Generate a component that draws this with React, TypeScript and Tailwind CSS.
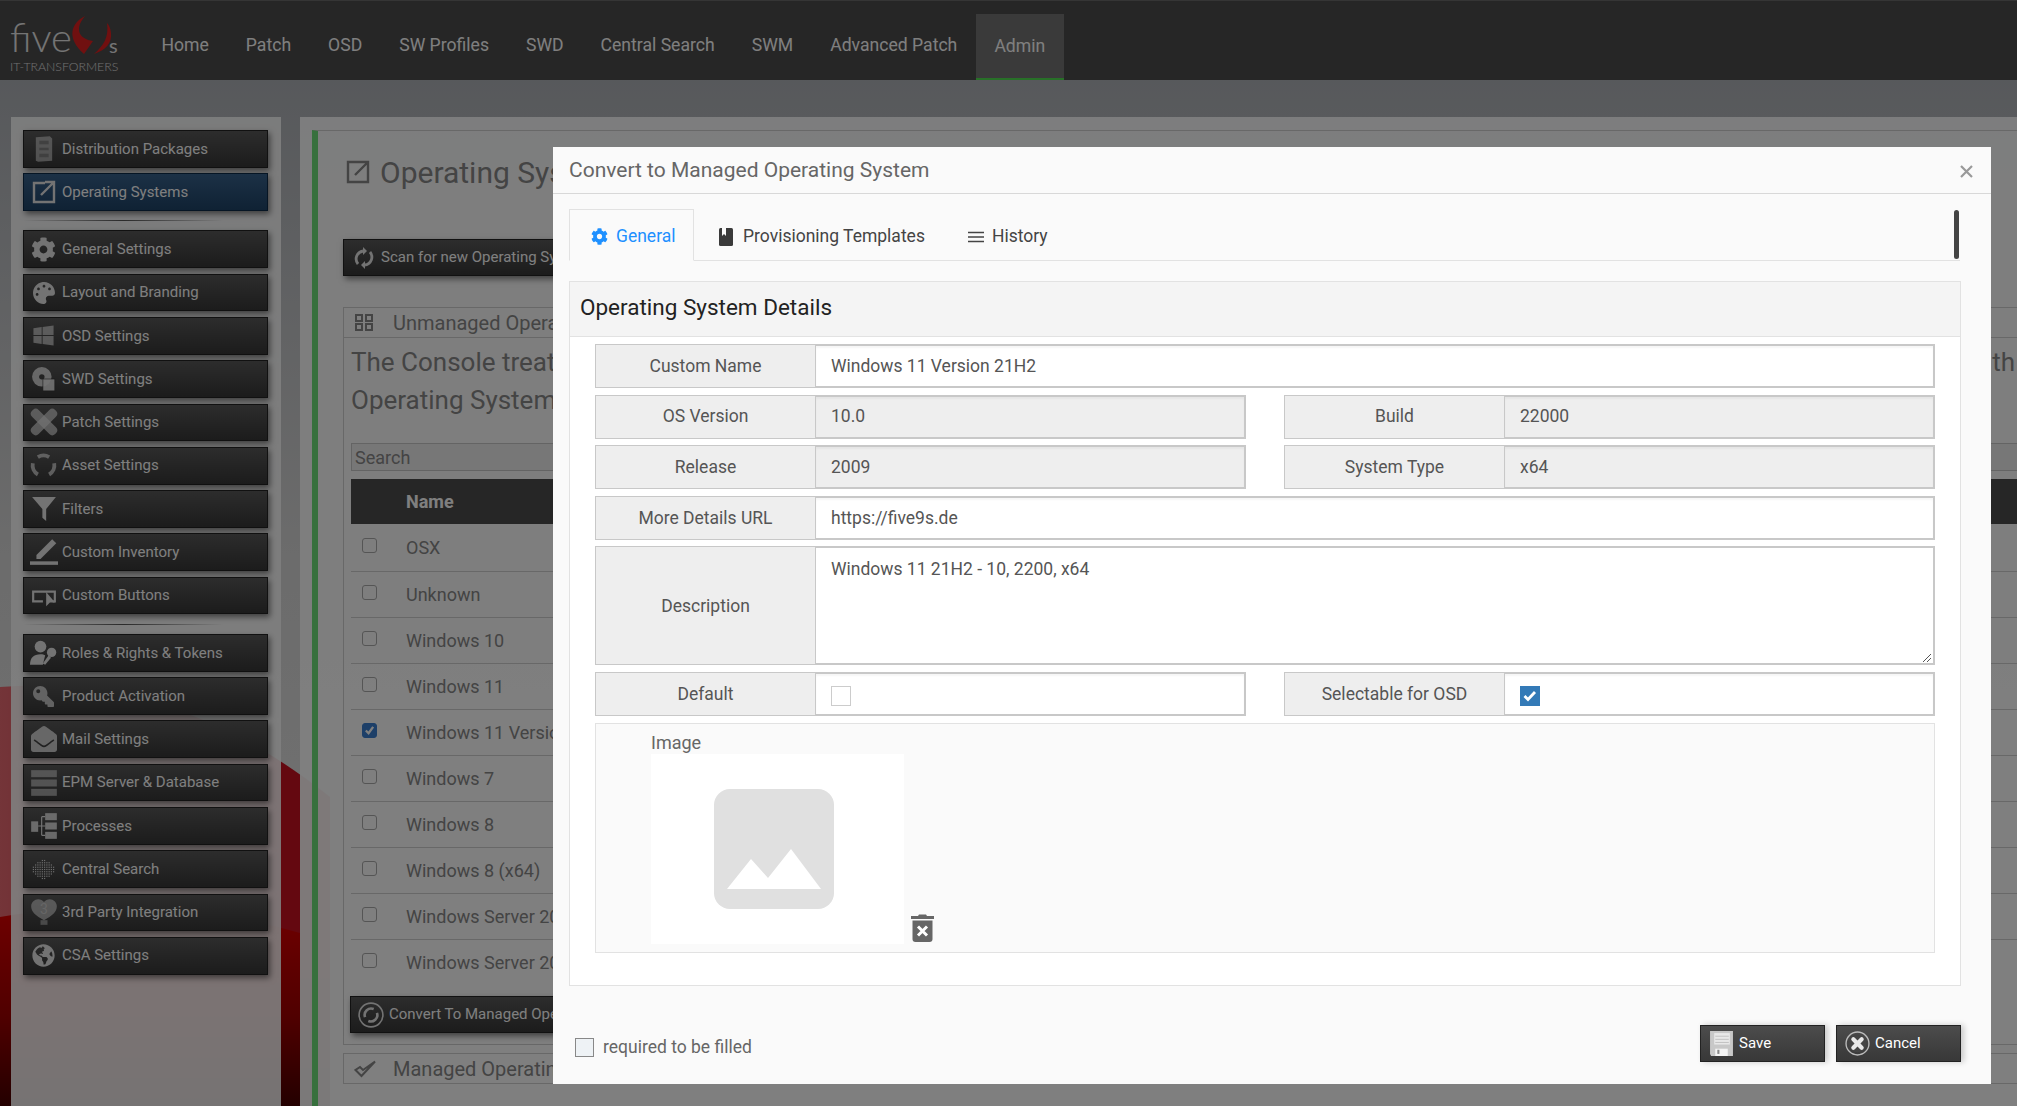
import type { ReactNode } from "react";
import { FaCog, FaPalette, FaWindows, FaEnvelopeOpen, FaKey, FaGlobeAmericas } from "react-icons/fa";

// --- SVG Icons ---
const Svg = ({ children, size = 26 }: { children: ReactNode; size?: number }) => (
  <svg width={size} height={size} viewBox="0 0 24 24" fill="currentColor">
    {children}
  </svg>
);

const PackageIcon = () => (
  <Svg size={28}>
    <path d="M5 2l12-1 2 2v19l-12 1-2-1z" opacity="0.6" />
    <path d="M8 5h8v3H8zM8 11h8v2H8zM8 16h8v3H8z" fill="#555" opacity="0.45" />
  </Svg>
);
const OpenBoxIcon = () => (
  <svg width="24" height="24" viewBox="0 0 24 24" fill="none" stroke="currentColor" strokeWidth="2.4">
    <path d="M13 3H2v19h20V11" />
    <path d="M9 15L21 3M13 2h9v9" />
  </svg>
);
const DiscIcon = () => (
  <Svg>
    <circle cx="10" cy="10" r="9" opacity="0.85" />
    <circle cx="10" cy="10" r="2.5" fill="#444" />
    <rect x="11" y="12" width="11" height="11" opacity="0.9" stroke="#333" strokeWidth="0.6" />
  </Svg>
);
const BandageIcon = () => (
  <Svg size={28}>
    <rect x="-2" y="8" width="28" height="8" rx="3.5" transform="rotate(45 12 12)" opacity="0.7" />
    <rect x="-2" y="8" width="28" height="8" rx="3.5" transform="rotate(-45 12 12)" opacity="0.7" />
  </Svg>
);
const RingArrowsIcon = () => (
  <svg width="27" height="27" viewBox="0 0 24 24" fill="none" stroke="currentColor" strokeWidth="3.4" opacity="0.75">
    <path d="M7 4.5a9.5 9.5 0 0 1 10 0" />
    <path d="M21.5 10a9.5 9.5 0 0 1-4.500 10" />
    <path d="M7 20a9.5 9.5 0 0 1-4.500-10" />
  </svg>
);
const FunnelIcon = () => (
  <Svg>
    <path d="M1 1h22l-9 11v11l-3.500-3V12z" />
  </Svg>
);
const PencilBarIcon = () => (
  <Svg size={28}>
    <path d="M19 1l3.500 3.500L9 18H5.500v-3.500z" />
    <rect x="0" y="20" width="24" height="3" />
  </Svg>
);
const ButtonCursorIcon = () => (
  <svg width="26" height="26" viewBox="0 0 24 24" fill="none" stroke="currentColor" strokeWidth="2">
    <path d="M11 17H2V8h20v9h-2" />
    <path d="M15 11v8l2-2h3z" fill="currentColor" />
  </svg>
);
const UserKeyIcon = () => (
  <Svg size={28}>
    <circle cx="9" cy="6.500" r="5" />
    <path d="M0 22c0-6 3-9 9-9 2 0 3 .4 4 1l-2 8z" />
    <circle cx="18.500" cy="11.500" r="4" />
    <path d="M16 14l-5 7 2 1 5-6z" />
  </Svg>
);
const StackIcon = () => (
  <Svg size={28}>
    <rect x="1" y="1" width="22" height="6" opacity="0.6" />
    <rect x="1" y="9" width="22" height="6" opacity="0.6" />
    <rect x="1" y="17" width="22" height="6" opacity="0.6" />
  </Svg>
);
const TreeIcon = () => (
  <Svg size={28}>
    <rect x="1" y="8" width="6" height="9" opacity="0.9" />
    <rect x="13" y="1" width="10" height="6" opacity="0.9" />
    <rect x="13" y="9" width="10" height="6" opacity="0.9" />
    <rect x="13" y="17" width="10" height="6" opacity="0.9" />
    <path d="M7 12h3M10 4v16M10 4h3M10 12h3M10 20h3" fill="none" stroke="currentColor" strokeWidth="1" />
  </Svg>
);
const DotsIcon = () => {
  const rows = [2, 6, 8, 10, 10, 10, 8, 6, 2];
  return (
    <Svg size={27}>
      {rows.map((n, r) =>
        Array.from({ length: n }).map((_, c) => (
          <rect
            key={`${r}-${c}`}
            x={12 - n + c * 2 + 0.5}
            y={3 + r * 2 + 0.5}
            width="1"
            height="1"
          />
        )),
      )}
    </Svg>
  );
};
const BalloonIcon = () => (
  <Svg size={28}>
    <path d="M12 19C5 15 1 12 1 7c0-3.500 3-6 6-6 2 0 4 1 5 2.500C13 2 15 1 17 1c3 0 6 2.500 6 6 0 5-4 8-11 12z" opacity="0.65" />
    <rect x="9" y="19" width="6" height="4" opacity="0.5" />
    <text x="12" y="14" textAnchor="middle" fontSize="12" fill="#ccc" fontFamily="Roboto">
      3
    </text>
  </Svg>
);
const RefreshIcon = ({ size = 24 }: { size?: number }) => (
  <svg width={size} height={size} viewBox="0 0 24 24" fill="none" stroke="currentColor" strokeWidth="2.800">
    <path d="M6 18a8 8 0 0 1 5-13" />
    <path d="M18 6a8 8 0 0 1-5 13" />
    <path d="M11 1v8l4-4zM13 23v-8l-4 4z" fill="currentColor" stroke="none" />
  </svg>
);
const RingRefreshIcon = () => (
  <svg width="26" height="26" viewBox="0 0 24 24" fill="none" stroke="currentColor">
    <circle cx="12" cy="12" r="11" strokeWidth="1.500" />
    <path d="M6.500 14a6 6 0 0 1 8-7.500M17.500 10a6 6 0 0 1-8 7.500" strokeWidth="2.400" />
  </svg>
);
const SaveIcon = () => (
  <svg width="25" height="25" viewBox="0 0 24 24">
    <path d="M1 0h22v24H2l-1-2z" fill="#c8c8c8" />
    <path d="M5 2h15v11H5z" fill="#e8e8e8" />
    <path d="M6 5h13M6 8h13M6 11h13" stroke="#bbb" strokeWidth="0.800" />
    <path d="M6 17h12v7H6z" fill="#f4f4f4" />
    <path d="M8 18h2v4H8z" fill="#888" />
  </svg>
);
const CancelIcon = () => (
  <svg width="25" height="25" viewBox="0 0 24 24">
    <circle cx="12" cy="12" r="11" fill="none" stroke="#bbb" strokeWidth="1.300" />
    <circle cx="12" cy="12" r="8.500" fill="#444" />
    <path d="M8 8l8 8M16 8l-8 8" stroke="#e8e8e8" strokeWidth="4" strokeLinecap="round" />
  </svg>
);
const BookIcon = () => (
  <svg width="14" height="18" viewBox="0 0 14 18">
    <rect width="14" height="18" rx="1.500" fill="#3a3a3a" />
    <path d="M3 0h4v8L5 6 3 8z" fill="#fafafa" />
  </svg>
);
const TrashIcon = () => (
  <svg width="23" height="29" viewBox="0 0 23 29">
    <path d="M8 1.500h7l1 1.500h7v3H0V3h7z" fill="#666" />
    <path d="M1.500 7.500h20V26a3 3 0 0 1-3 3h-14a3 3 0 0 1-3-3z" fill="#666" />
    <path d="M7 13.500l9 9M16 13.500l-9 9" stroke="#fff" strokeWidth="3" />
  </svg>
);
const PlaceholderIcon = () => (
  <svg width="120" height="120" viewBox="0 0 120 120">
    <rect width="120" height="120" rx="16" fill="#e0e0e0" />
    <path d="M13 100L37 70l17 19 23-29 30 40z" fill="#fff" />
  </svg>
);
const Grip = () => (
  <svg width="10" height="10" viewBox="0 0 10 10" stroke="#555" strokeWidth="1">
    <path d="M1 9l8-8M5 9l4-4" />
  </svg>
);

const groups: { label: string; icon: ReactNode; active?: boolean }[][] = [
  [
    { label: "Distribution Packages", icon: <PackageIcon /> },
    { label: "Operating Systems", icon: <OpenBoxIcon />, active: true },
  ],
  [
    { label: "General Settings", icon: <FaCog size={25} /> },
    { label: "Layout and Branding", icon: <FaPalette size={22} /> },
    { label: "OSD Settings", icon: <span className="opacity-70"><FaWindows size={23} /></span> },
    { label: "SWD Settings", icon: <DiscIcon /> },
    { label: "Patch Settings", icon: <BandageIcon /> },
    { label: "Asset Settings", icon: <RingArrowsIcon /> },
    { label: "Filters", icon: <FunnelIcon /> },
    { label: "Custom Inventory", icon: <PencilBarIcon /> },
    { label: "Custom Buttons", icon: <ButtonCursorIcon /> },
  ],
  [
    { label: "Roles & Rights & Tokens", icon: <UserKeyIcon /> },
    { label: "Product Activation", icon: <span className="opacity-80"><FaKey size={21} className="-scale-x-100" /></span> },
    { label: "Mail Settings", icon: <span className="opacity-85"><FaEnvelopeOpen size={26} /></span> },
    { label: "EPM Server & Database", icon: <StackIcon /> },
    { label: "Processes", icon: <TreeIcon /> },
    { label: "Central Search", icon: <DotsIcon /> },
    { label: "3rd Party Integration", icon: <BalloonIcon /> },
    { label: "CSA Settings", icon: <FaGlobeAmericas size={23} /> },
  ],
];

const navItems = ["Home", "Patch", "OSD", "SW Profiles", "SWD", "Central Search", "SWM", "Advanced Patch"];

const osRows = [
  "OSX",
  "Unknown",
  "Windows 10",
  "Windows 11",
  "Windows 11 Version 21H2",
  "Windows 7",
  "Windows 8",
  "Windows 8 (x64)",
  "Windows Server 2012",
  "Windows Server 2016",
];

function Logo() {
  return (
    <div className="relative h-20 w-[143px] shrink-0">
      <span className="absolute left-[10px] top-[16px] font-['Lato',sans-serif] text-[40px] font-light leading-[40px] text-[#e8e8e8]">
        five
      </span>
      <span className="absolute left-[109px] top-[34px] font-['Lato',sans-serif] text-[20px] leading-[20px] text-[#e8e8e8]">
        s
      </span>
      <span className="absolute left-[10px] top-[59px] font-['Lato',sans-serif] text-[12.3px] font-light leading-[14px] text-[#e0e0e0]">
        IT-TRANSFORMERS
      </span>
      <svg className="absolute left-0 top-0" width="143" height="80" viewBox="0 0 143 80">
        <path d="M85 15C71 22 66 37 84 53l9-13C79 38 74 28 85 15z" fill="#e02020" />
        <path d="M107 22c2 14-3 22-13 31 12-4 18-11 17-21-.3-4-2-8-4-10z" fill="#e02020" />
      </svg>
    </div>
  );
}

function SideButton({ label, icon, active }: { label: string; icon: ReactNode; active?: boolean }) {
  return (
    <div
      className={`flex h-[37.7px] items-center border shadow-[2px_3px_6px_rgba(0,0,0,0.5)] ${
        active
          ? "border-[#0c2a48] bg-gradient-to-b from-[#38628c] to-[#1f4468]"
          : "border-[#222] bg-gradient-to-b from-[#5a5a5a] to-[#383838]"
      }`}
    >
      <span className="flex w-[38px] justify-center pl-px text-[#e6e6e6]">{icon}</span>
      <span className="text-[15px] text-white">{label}</span>
    </div>
  );
}

function DarkButton({ icon, label, className }: { icon: ReactNode; label: string; className: string }) {
  return (
    <div
      className={`flex h-[37px] items-center overflow-hidden whitespace-nowrap border border-[#222] bg-gradient-to-b from-[#5a5a5a] to-[#383838] text-[15px] text-white shadow-[2px_3px_6px_rgba(0,0,0,0.5)] ${className}`}
    >
      {icon}
      <span>{label}</span>
    </div>
  );
}

function Field({
  label,
  value,
  readOnly,
  children,
  className = "h-11",
}: {
  label: string;
  value?: string;
  readOnly?: boolean;
  children?: ReactNode;
  className?: string;
}) {
  return (
    <div className={`flex ${className}`}>
      <div className="flex w-[221px] shrink-0 items-center justify-center border border-[#c8c8c8] bg-[#eeeeee] text-[17.5px] text-[#555]">
        {label}
      </div>
      <div
        className={`flex flex-1 items-center border-y-2 border-r-2 border-[#c8c8c8] pl-[15px] text-[17.5px] text-[#555] shadow-[inset_0_2px_2px_rgba(0,0,0,0.04)] ${
          readOnly ? "bg-[#eeeeee]" : "bg-white"
        }`}
      >
        {value}
        {children}
      </div>
    </div>
  );
}

function Page() {
  return (
    <div className="relative flex h-full flex-col">
      <header className="flex h-20 shrink-0 border-t border-[#6a6a6a] bg-[#4c4c4c]">
        <Logo />
        <nav className="flex">
          {navItems.map((item) => (
            <div key={item} className="flex items-center px-[18.5px] pt-[10px] text-[17.6px] text-white">
              {item}
            </div>
          ))}
          <div className="mt-[13px] flex w-[88px] items-center justify-center border-b-2 border-[#50e050] bg-[#747474] text-[17.6px] text-white">
            Admin
          </div>
        </nav>
      </header>

      <div className="flex min-h-0 flex-1 gap-[19px] pl-[11px] pt-[37px]">
        <aside className="flex w-[270px] shrink-0 flex-col bg-white/90 pl-3 pr-[13px] pt-[13px]">
          {groups.map((group, i) => (
            <div key={i}>
              {i > 0 && (
                <div className="flex h-[19.5px] items-center">
                  <div className="h-px w-[200px] bg-gradient-to-r from-transparent via-[#555] to-transparent" />
                </div>
              )}
              <div className="flex flex-col gap-[5.6px]">
                {group.map((b) => (
                  <SideButton key={b.label} {...b} />
                ))}
              </div>
            </div>
          ))}
        </aside>

        <main className="w-[1760px] shrink-0 bg-white/95 pl-3 pt-[13px]">
          <div className="h-full border-l-[6px] border-t border-[#6ee07a] border-t-[#d0d0d0] pl-[25px] text-[#888]">
            <div className="mt-[21px] flex h-[40px] items-center gap-[10px] pl-[3px]">
              <svg width="24" height="24" viewBox="0 0 24 24" fill="none" stroke="currentColor" strokeWidth="2.400">
                <path d="M13 2H2v20h20V11" />
                <path d="M9 15L21 3M13 2h9v9" />
              </svg>
              <h1 className="text-[30px]">Operating Systems</h1>
            </div>

            <DarkButton
              icon={
                <span className="ml-[8px] mr-[5px] text-[#e6e6e6]">
                  <RefreshIcon />
                </span>
              }
              label="Scan for new Operating Systems"
              className="mt-[47px] w-[300px]"
            />

            <section className="mt-[31px] h-[738px] border border-[#d0d0d0] pb-3">
              <div className="flex h-[30px] items-center border-b border-[#d0d0d0] pl-[11px] text-[20px]">
                <svg width="19" height="17" viewBox="0 0 19 17" fill="none" stroke="currentColor" strokeWidth="2">
                  <path d="M1 1h6v6H1zM11 1h6v6h-6zM1 10h6v6H1zM11 10h6v6h-6z" />
                </svg>
                <span className="ml-[19px]">Unmanaged Operating Systems</span>
              </div>
              <div className="px-[7px]">
                <div className="mt-[6px] flex justify-between text-[26px] leading-[37.5px]">
                  <span>The Console treats every Operating System found on a device as unmanaged until</span>
                  <span className="pr-[37px]">th</span>
                </div>
                <p className="text-[26px] leading-[37.5px]">Operating Systems</p>
                <div className="mt-[24px] flex h-7 items-center border border-[#c8c8c8] bg-[#eee] pl-[3px] text-[18px]">
                  Search
                </div>
                <div className="mt-[8px] h-[498px] overflow-hidden">
                  <div className="flex h-[45px] items-center bg-[#4c4c4c] pl-[55px] text-[18px] font-bold text-white">
                    Name
                  </div>
                  {osRows.map((row, i) => (
                    <div
                      key={row}
                      className={`flex items-center border-b border-[#d0d0d0] pl-[11px] text-[18px] ${
                        i === 0 ? "h-12" : "h-[46px]"
                      }`}
                    >
                      <span
                        className={`mb-[4px] flex h-[15px] w-[15px] items-center justify-center rounded-[3px] border ${
                          i === 4 ? "border-[#3a7fd0] bg-[#3a7fd0]" : "border-[#aaa]"
                        }`}
                      >
                        {i === 4 && (
                          <svg width="11" height="11" viewBox="0 0 12 12" fill="none" stroke="#fff" strokeWidth="2.500">
                            <path d="M2 6l3 3 5-7" />
                          </svg>
                        )}
                      </span>
                      <span className="ml-[29px]">{row}</span>
                    </div>
                  ))}
                </div>
                <DarkButton
                  icon={
                    <span className="ml-[7px] mr-[5px] text-[#e6e6e6]">
                      <RingRefreshIcon />
                    </span>
                  }
                  label="Convert To Managed Operating System"
                  className="-ml-px mt-[19px] w-[300px]"
                />
              </div>
            </section>

            <section className="mt-2 flex h-[31px] items-center border border-[#d0d0d0] pl-[10px] text-[20px]">
              <svg width="23" height="18" viewBox="0 0 23 18" fill="none" stroke="currentColor" strokeWidth="2">
                <path d="M1.500 10l6 6L21 1.500 9 10l-3-3z" />
              </svg>
              <span className="ml-[16px]">Managed Operating Systems</span>
            </section>
          </div>
        </main>
      </div>
    </div>
  );
}

function Modal() {
  return (
    <div className="absolute left-[553px] top-[147px] flex h-[937px] w-[1438px] flex-col bg-[#fafafa] text-[#666]">
      <div className="flex h-[47px] shrink-0 items-center justify-between border-b border-[#d8d8d8] pl-4 pr-[18px] pt-[2px]">
        <h2 className="text-[21px]">Convert to Managed Operating System</h2>
        <svg width="13" height="13" viewBox="0 0 13 13" stroke="#999" strokeWidth="2.200">
          <path d="M1 1l11 11M12 1L1 12" />
        </svg>
      </div>

      <div className="ml-4 mr-[31px] mt-[15px] flex h-[52px] shrink-0 items-stretch border-b border-[#e2e2e2] text-[17.5px] text-[#444]">
        <div className="-mb-px flex w-[125px] items-center gap-2 border border-[#e2e2e2] border-b-[#fafafa] bg-[#fafafa] pl-[21px] pt-[2px] text-[#1e90ff]">
          <FaCog size={17} />
          General
        </div>
        <div className="ml-[25px] flex items-center gap-[10px] pt-[4px]">
          <BookIcon />
          Provisioning Templates
        </div>
        <div className="ml-[43px] flex items-center gap-2 pt-[4px]">
          <svg width="16" height="12" viewBox="0 0 16 12" stroke="#444" strokeWidth="1.600">
            <path d="M0 1.500h16M0 6h16M0 10.500h16" />
          </svg>
          History
        </div>
        <div className="ml-auto mr-px mt-px h-[49px] w-[5px] rounded-full bg-[#444]" />
      </div>

      <section className="ml-4 mr-[30px] mt-5 flex h-[705px] shrink-0 flex-col border border-[#e2e2e2] bg-white">
        <div className="flex h-[55px] shrink-0 items-center border-b border-[#e2e2e2] bg-[#f4f4f4] pb-[2px] pl-[10px] text-[22.5px] text-[#222]">
          Operating System Details
        </div>
        <div className="flex flex-col gap-[6.6px] pl-[25px] pr-[25px] pt-[7px]">
          <Field label="Custom Name" value="Windows 11 Version 21H2" />
          <div className="grid grid-cols-2 gap-x-[38px] gap-y-[6.6px]">
            <Field label="OS Version" value="10.0" readOnly />
            <Field label="Build" value="22000" readOnly />
            <Field label="Release" value="2009" readOnly />
            <Field label="System Type" value="x64" readOnly />
          </div>
          <Field label="More Details URL" value="https://five9s.de" />
          <div className="flex h-[119px]">
            <div className="flex w-[221px] shrink-0 items-center justify-center border border-[#c8c8c8] bg-[#eeeeee] text-[17.5px] text-[#555]">
              Description
            </div>
            <div className="flex flex-1 flex-col border-y-2 border-r-2 border-[#c8c8c8] bg-white pl-[15px] pr-px pt-[8px] text-[17.5px] text-[#555]">
              <div>Windows 11 21H2 - 10, 2200, x64</div>
              <div className="mt-auto self-end leading-none">
                <Grip />
              </div>
            </div>
          </div>
          <div className="grid grid-cols-2 gap-x-[38px]">
            <Field label="Default">
              <span className="mt-[5px] h-5 w-5 border border-[#ccc] bg-white" />
            </Field>
            <Field label="Selectable for OSD">
              <span className="mt-[5px] flex h-5 w-5 items-center justify-center bg-[#337ab7]">
                <svg width="14" height="12" viewBox="0 0 14 12" fill="none" stroke="#fff" strokeWidth="2.800">
                  <path d="M1.500 6l3.500 3.500 7-7.500" />
                </svg>
              </span>
            </Field>
          </div>
          <div className="flex h-[230px] border border-[#e2e2e2] bg-[#fafafa] pl-[55px] pt-[8px]">
            <div>
              <div className="text-[18px] leading-[22px] text-[#666]">Image</div>
              <div className="flex h-[190px] w-[253px] items-center justify-center bg-white pr-[7px]">
                <PlaceholderIcon />
              </div>
            </div>
            <div className="ml-[7px] mt-[181px]">
              <TrashIcon />
            </div>
          </div>
        </div>
      </section>

      <div className="ml-[22px] mr-[30px] mt-[39px] flex items-start justify-between">
        <div className="mt-[9px] flex items-center gap-[9px] text-[17.5px]">
          <span className="h-[19px] w-[19px] border border-[#888] bg-[#eef2f5]" />
          required to be filled
        </div>
        <div className="flex gap-[11px]">
          <DarkButton
            icon={
              <span className="ml-[8px] mr-[5px] flex">
                <SaveIcon />
              </span>
            }
            label="Save"
            className="w-[125px] !from-[#4c4c4c] !to-[#383838] !shadow-[3px_0_6px_rgba(0,0,0,0.2)]"
          />
          <DarkButton
            icon={
              <span className="ml-[8px] mr-[5px] flex">
                <CancelIcon />
              </span>
            }
            label="Cancel"
            className="w-[125px] !from-[#4c4c4c] !to-[#383838] !shadow-[3px_0_6px_rgba(0,0,0,0.2)]"
          />
        </div>
      </div>
    </div>
  );
}

export default function App() {
  return (
    <div className="relative h-[1106px] w-[2017px] overflow-hidden bg-gradient-to-b from-[#a8acb2] via-[#d8d8d8] to-[#e8e8e8] font-['Roboto',sans-serif]">
      {/* wallpaper swoosh behind the panels */}
      <svg className="absolute inset-0" width="2017" height="1106" viewBox="0 0 2017 1106">
        <defs>
          <linearGradient id="swooshPale" x1="0" y1="0" x2="1" y2="0">
            <stop offset="0" stopColor="#e86a72" />
            <stop offset="0.8" stopColor="#c81020" />
          </linearGradient>
          <linearGradient id="swooshDeep" x1="0" y1="0" x2="0" y2="1">
            <stop offset="0" stopColor="#e00000" />
            <stop offset="0.55" stopColor="#a00000" />
            <stop offset="1" stopColor="#480000" />
          </linearGradient>
        </defs>
        <path d="M0 687c120-10 230 30 330 110v309H0z" fill="url(#swooshPale)" />
        <path d="M0 917c120-20 220-10 330 25v164H0z" fill="url(#swooshDeep)" />
      </svg>
      <Page />
      <div className="absolute inset-0 bg-black/50" />
      <Modal />
    </div>
  );
}
